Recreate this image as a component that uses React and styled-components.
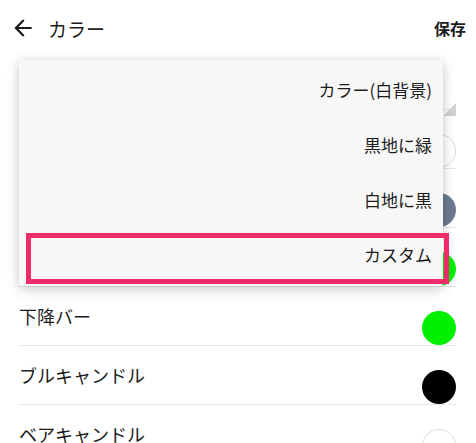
import React from "react"
import styled, { createGlobalStyle } from "styled-components"

const GlobalStyle = createGlobalStyle`
  html, body {
    margin: 0;
    padding: 0;
    background: #fff;
  }
  body {
    font-family: Roboto, "Noto Sans CJK JP", sans-serif;
    color: #1c1c1c;
  }
`

const Screen = styled.div`
  position: relative;
  width: 476px;
  height: 443px;
  overflow: hidden;
  background: #fff;
`

const Header = styled.header`
  height: 51px;
  display: flex;
  align-items: center;
  padding: 5px 10px 0 10px;
  box-sizing: border-box;
`

const BackButton = styled.span`
  display: flex;
  width: 26px;
  height: 26px;
  margin-right: 12px;
`

const Title = styled.h1`
  margin: 0;
  flex: 1;
  font-size: 19px;
  font-weight: 400;
  font-family: "Noto Sans CJK JP", sans-serif;
`

const SaveLink = styled.span`
  font-size: 16px;
  font-weight: 700;
  font-family: "Noto Sans CJK JP", sans-serif;
`

const List = styled.div`
  margin: 0 20px 0 18px;
`

const Row = styled.div`
  position: relative;
  height: 58px;
  display: flex;
  align-items: center;
  justify-content: space-between;
  border-bottom: 1px solid #e9e9e9;
  padding-top: 3px;
  box-sizing: content-box;
  margin-top: -3px;
`

const Label = styled.span`
  font-size: 18px;
  font-family: "Noto Sans CJK JP", sans-serif;
  margin-left: 1px;
`

const Swatch = styled.span`
  align-self: flex-end;
  width: 34px;
  height: 34px;
  border-radius: 50%;
  background: ${p => p.$color};
  box-sizing: border-box;
  border: ${p => (p.$outlined ? "1px solid #dcdcdc" : "none")};
`

const SpinnerCorner = styled.svg`
  position: absolute;
  right: 0;
  bottom: -7px;
`

const Menu = styled.div`
  position: absolute;
  left: 19px;
  top: 60px;
  width: 424px;
  padding: 2px 0 4px;
  background: #f7f7f7;
  border-radius: 2px;
  box-shadow: 0 4px 14px rgba(0, 0, 0, 0.16), 0 0 8px rgba(0, 0, 0, 0.08);
`

const MenuItem = styled.div`
  position: relative;
  height: 55px;
  display: flex;
  align-items: center;
  justify-content: flex-end;
  padding-right: 11px;
  font-size: 17px;
  font-family: "Noto Sans CJK JP", sans-serif;
  color: #1c1c1c;
`

const Highlight = styled.span`
  position: absolute;
  left: 7px;
  right: -6px;
  top: 6px;
  bottom: -2px;
  border: 5px solid #ee2b69;
  pointer-events: none;
`

const rows = [
  { label: "カラーテーマ", spinner: true },
  { label: "背景", color: "#fff", outlined: true },
  { label: "グリッド", color: "#6c7b92" },
  { label: "上昇バー", color: "#00ee00" },
  { label: "下降バー", color: "#00f000" },
  { label: "ブルキャンドル", color: "#000" },
  { label: "ベアキャンドル", color: "#fff", outlined: true },
]

const options = ["カラー(白背景)", "黒地に緑", "白地に黒", "カスタム"]

export default function App() {
  return (
    <Screen>
      <GlobalStyle />
      <Header>
        <BackButton>
          <svg width="26" height="26" viewBox="0 0 24 24">
            <path
              fill="#1c1c1c"
              d="M20 11H7.83l5.59-5.59L12 4l-8 8 8 8 1.41-1.41L7.83 13H20v-2z"
            />
          </svg>
        </BackButton>
        <Title>カラー</Title>
        <SaveLink>保存</SaveLink>
      </Header>
      <List>
        {rows.map(r => (
          <Row key={r.label}>
            <Label>{r.label}</Label>
            {r.spinner ? (
              <SpinnerCorner width="13" height="13" viewBox="0 0 13 13">
                <path d="M13 0V13H0Z" fill="#d2d2d2" />
              </SpinnerCorner>
            ) : (
              <Swatch $color={r.color} $outlined={r.outlined} />
            )}
          </Row>
        ))}
      </List>
      <Menu>
        {options.map(o => (
          <MenuItem key={o}>
            {o}
            {o === "カスタム" && <Highlight />}
          </MenuItem>
        ))}
      </Menu>
    </Screen>
  )
}
